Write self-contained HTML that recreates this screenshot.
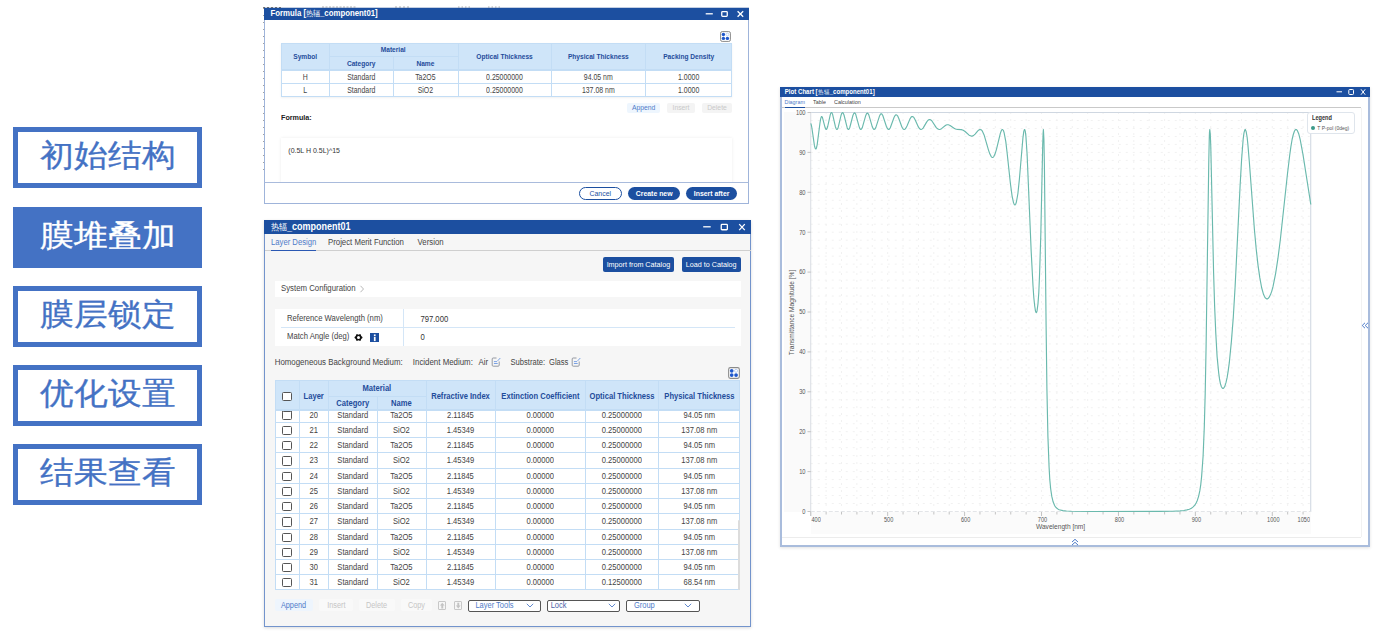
<!DOCTYPE html><html><head><meta charset="utf-8"><style>
html,body{margin:0;padding:0;}
body{width:1378px;height:637px;overflow:hidden;position:relative;background:#fff;font-family:"Liberation Sans", sans-serif;}
div{box-sizing:border-box;}
</style></head><body>
<div style="position:absolute;left:13px;top:127px;width:189.00px;height:61.00px;border:5px solid #4472c4;background:#fff"></div>
<div style="position:absolute;left:13px;top:126.2px;width:189px;height:58px;line-height:58px;text-align:center;font-size:34px;color:#4472c4;-webkit-text-stroke:0.35px #4472c4;transform:scaleY(0.92)">初始结构</div>
<div style="position:absolute;left:13px;top:207px;width:189.00px;height:61.00px;background:#4472c4"></div>
<div style="position:absolute;left:13px;top:206.2px;width:189px;height:58px;line-height:58px;text-align:center;font-size:34px;color:#fff;-webkit-text-stroke:0.35px #fff;transform:scaleY(0.92)">膜堆叠加</div>
<div style="position:absolute;left:13px;top:286px;width:189.00px;height:61.00px;border:5px solid #4472c4;background:#fff"></div>
<div style="position:absolute;left:13px;top:285.2px;width:189px;height:58px;line-height:58px;text-align:center;font-size:34px;color:#4472c4;-webkit-text-stroke:0.35px #4472c4;transform:scaleY(0.92)">膜层锁定</div>
<div style="position:absolute;left:13px;top:365px;width:189.00px;height:61.00px;border:5px solid #4472c4;background:#fff"></div>
<div style="position:absolute;left:13px;top:364.2px;width:189px;height:58px;line-height:58px;text-align:center;font-size:34px;color:#4472c4;-webkit-text-stroke:0.35px #4472c4;transform:scaleY(0.92)">优化设置</div>
<div style="position:absolute;left:13px;top:444px;width:189.00px;height:61.00px;border:5px solid #4472c4;background:#fff"></div>
<div style="position:absolute;left:13px;top:443.2px;width:189px;height:58px;line-height:58px;text-align:center;font-size:34px;color:#4472c4;-webkit-text-stroke:0.35px #4472c4;transform:scaleY(0.92)">结果查看</div>
<div style="position:absolute;left:264px;top:8px;width:485.00px;height:196.00px;background:#fff;border:1px solid #9fb4da;"></div>
<div style="position:absolute;left:264px;top:7px;width:485.00px;height:1.00px;background:#c3cfe3"></div>
<div style="position:absolute;left:264px;top:8px;width:485.00px;height:12.00px;background:#1c4fa0"></div>
<div style="position:absolute;left:270.5px;top:7.76px;height:12.48px;line-height:12.48px;font-size:7.8px;color:#fff;font-weight:bold;white-space:nowrap;transform:scaleY(1.12);">Formula [<span style="font-weight:normal;font-size:0.92em">热辐</span>_component01]</div>
<svg style="position:absolute;left:0;top:0" width="1378" height="637"><g stroke="#fff" stroke-width="1.3" fill="none"><line x1="705.7" y1="13.8" x2="712.8" y2="13.8"/><rect x="721.75" y="11.55" width="5.499999999999955" height="4.8" rx="0.8"/><line x1="737.6" y1="11.200000000000001" x2="743.2" y2="16.7"/><line x1="743.2" y1="11.200000000000001" x2="737.6" y2="16.7"/></g></svg>
<svg style="position:absolute;left:0;top:0" width="1378" height="637"><line x1="263.5" y1="8" x2="263.5" y2="170" stroke="#666" stroke-width="1" stroke-dasharray="1,6" opacity="0.6"/><line x1="263" y1="7.5" x2="282" y2="7.5" stroke="#444" stroke-width="1" stroke-dasharray="2,2" opacity="0.7"/><g stroke="#555" stroke-width="1" opacity="0.45"><line x1="322" y1="7" x2="357" y2="7" stroke-dasharray="2,1.5"/><line x1="395" y1="7" x2="410" y2="7" stroke-dasharray="2,2"/><line x1="458" y1="7" x2="472" y2="7" stroke-dasharray="1.5,2"/><line x1="488" y1="7" x2="500" y2="7" stroke-dasharray="1.5,2"/></g></svg>
<svg style="position:absolute;left:720.4px;top:30.8px" width="11" height="11" viewBox="0 0 11 11"><rect x="0.6" y="0.6" width="9.8" height="9.8" rx="1.6" fill="#fff" stroke="#8a8a8a" stroke-width="1"/><circle cx="3.4" cy="3.5" r="1.7" fill="#2058cc"/><circle cx="3.4" cy="7.4" r="1.7" fill="#2058cc"/><circle cx="7.4" cy="7.4" r="1.7" fill="#2058cc"/><circle cx="7.4" cy="3.5" r="1.4" fill="none" stroke="#a9c3ee" stroke-width="0.7"/></svg>
<div style="position:absolute;left:281px;top:43px;width:451.00px;height:53.70px;background:#fff;border:1px solid #c3ddf5;box-shadow:0 1px 2px rgba(0,0,0,0.06)"></div>
<div style="position:absolute;left:281px;top:43px;width:451.00px;height:26.70px;background:#cfe5f9;border:1px solid #c3ddf5"></div>
<div style="position:absolute;left:329.3px;top:43px;width:1.00px;height:53.70px;background:#c3ddf5"></div>
<div style="position:absolute;left:393.2px;top:56.4px;width:1.00px;height:40.30px;background:#c3ddf5"></div>
<div style="position:absolute;left:457.6px;top:43px;width:1.00px;height:53.70px;background:#c3ddf5"></div>
<div style="position:absolute;left:551.3px;top:43px;width:1.00px;height:53.70px;background:#c3ddf5"></div>
<div style="position:absolute;left:645.3px;top:43px;width:1.00px;height:53.70px;background:#c3ddf5"></div>
<div style="position:absolute;left:329.3px;top:56.4px;width:128.30px;height:1.00px;background:#c3ddf5"></div>
<div style="position:absolute;left:281px;top:69.7px;width:451.00px;height:1.00px;background:#c3ddf5"></div>
<div style="position:absolute;left:281px;top:83.4px;width:451.00px;height:1.00px;background:#c3ddf5"></div>
<div style="position:absolute;left:155.20px;width:300px;text-align:center;top:51.92px;height:10.56px;line-height:10.56px;font-size:6.6px;color:#1f4c9b;font-weight:bold;white-space:nowrap;transform:scaleY(1.22);">Symbol</div>
<div style="position:absolute;left:243.20px;width:300px;text-align:center;top:45.22px;height:10.56px;line-height:10.56px;font-size:6.6px;color:#1f4c9b;font-weight:bold;white-space:nowrap;transform:scaleY(1.22);">Material</div>
<div style="position:absolute;left:211.20px;width:300px;text-align:center;top:58.72px;height:10.56px;line-height:10.56px;font-size:6.6px;color:#1f4c9b;font-weight:bold;white-space:nowrap;transform:scaleY(1.22);">Category</div>
<div style="position:absolute;left:275.40px;width:300px;text-align:center;top:58.72px;height:10.56px;line-height:10.56px;font-size:6.6px;color:#1f4c9b;font-weight:bold;white-space:nowrap;transform:scaleY(1.22);">Name</div>
<div style="position:absolute;left:354.50px;width:300px;text-align:center;top:51.92px;height:10.56px;line-height:10.56px;font-size:6.6px;color:#1f4c9b;font-weight:bold;white-space:nowrap;transform:scaleY(1.22);">Optical Thickness</div>
<div style="position:absolute;left:448.30px;width:300px;text-align:center;top:51.92px;height:10.56px;line-height:10.56px;font-size:6.6px;color:#1f4c9b;font-weight:bold;white-space:nowrap;transform:scaleY(1.22);">Physical Thickness</div>
<div style="position:absolute;left:538.70px;width:300px;text-align:center;top:51.92px;height:10.56px;line-height:10.56px;font-size:6.6px;color:#1f4c9b;font-weight:bold;white-space:nowrap;transform:scaleY(1.22);">Packing Density</div>
<div style="position:absolute;left:155.15px;width:300px;text-align:center;top:72.04px;height:11.12px;line-height:11.12px;font-size:6.95px;color:#444;font-weight:normal;white-space:nowrap;transform:scaleY(1.18);">H</div>
<div style="position:absolute;left:211.25px;width:300px;text-align:center;top:72.04px;height:11.12px;line-height:11.12px;font-size:6.95px;color:#444;font-weight:normal;white-space:nowrap;transform:scaleY(1.18);">Standard</div>
<div style="position:absolute;left:275.40px;width:300px;text-align:center;top:72.04px;height:11.12px;line-height:11.12px;font-size:6.95px;color:#444;font-weight:normal;white-space:nowrap;transform:scaleY(1.18);">Ta2O5</div>
<div style="position:absolute;left:354.45px;width:300px;text-align:center;top:72.04px;height:11.12px;line-height:11.12px;font-size:6.95px;color:#444;font-weight:normal;white-space:nowrap;transform:scaleY(1.18);">0.25000000</div>
<div style="position:absolute;left:448.30px;width:300px;text-align:center;top:72.04px;height:11.12px;line-height:11.12px;font-size:6.95px;color:#444;font-weight:normal;white-space:nowrap;transform:scaleY(1.18);">94.05 nm</div>
<div style="position:absolute;left:538.65px;width:300px;text-align:center;top:72.04px;height:11.12px;line-height:11.12px;font-size:6.95px;color:#444;font-weight:normal;white-space:nowrap;transform:scaleY(1.18);">1.0000</div>
<div style="position:absolute;left:155.15px;width:300px;text-align:center;top:85.44px;height:11.12px;line-height:11.12px;font-size:6.95px;color:#444;font-weight:normal;white-space:nowrap;transform:scaleY(1.18);">L</div>
<div style="position:absolute;left:211.25px;width:300px;text-align:center;top:85.44px;height:11.12px;line-height:11.12px;font-size:6.95px;color:#444;font-weight:normal;white-space:nowrap;transform:scaleY(1.18);">Standard</div>
<div style="position:absolute;left:275.40px;width:300px;text-align:center;top:85.44px;height:11.12px;line-height:11.12px;font-size:6.95px;color:#444;font-weight:normal;white-space:nowrap;transform:scaleY(1.18);">SiO2</div>
<div style="position:absolute;left:354.45px;width:300px;text-align:center;top:85.44px;height:11.12px;line-height:11.12px;font-size:6.95px;color:#444;font-weight:normal;white-space:nowrap;transform:scaleY(1.18);">0.25000000</div>
<div style="position:absolute;left:448.30px;width:300px;text-align:center;top:85.44px;height:11.12px;line-height:11.12px;font-size:6.95px;color:#444;font-weight:normal;white-space:nowrap;transform:scaleY(1.18);">137.08 nm</div>
<div style="position:absolute;left:538.65px;width:300px;text-align:center;top:85.44px;height:11.12px;line-height:11.12px;font-size:6.95px;color:#444;font-weight:normal;white-space:nowrap;transform:scaleY(1.18);">1.0000</div>
<div style="position:absolute;left:626.8px;top:102.5px;width:33.60px;height:10.50px;background:#eef6fe;border-radius:2px"></div>
<div style="position:absolute;left:493.60px;width:300px;text-align:center;top:103.16px;height:10.88px;line-height:10.88px;font-size:6.8px;color:#4f7cc9;font-weight:normal;white-space:nowrap;transform:scaleY(1.12);">Append</div>
<div style="position:absolute;left:667px;top:102.5px;width:28.00px;height:10.50px;background:#f4f4f4;border-radius:2px"></div>
<div style="position:absolute;left:531.00px;width:300px;text-align:center;top:103.16px;height:10.88px;line-height:10.88px;font-size:6.8px;color:#c9c9c9;font-weight:normal;white-space:nowrap;transform:scaleY(1.12);">Insert</div>
<div style="position:absolute;left:702px;top:102.5px;width:30.00px;height:10.50px;background:#f4f4f4;border-radius:2px"></div>
<div style="position:absolute;left:567.00px;width:300px;text-align:center;top:103.16px;height:10.88px;line-height:10.88px;font-size:6.8px;color:#c9c9c9;font-weight:normal;white-space:nowrap;transform:scaleY(1.12);">Delete</div>
<div style="position:absolute;left:281px;top:112.24px;height:11.52px;line-height:11.52px;font-size:7.2px;color:#222;font-weight:bold;white-space:nowrap;transform:scaleY(1.12);">Formula:</div>
<div style="position:absolute;left:281px;top:137.5px;width:451.00px;height:47.50px;background:#fff;box-shadow:0 0 3px rgba(0,0,0,0.08)"></div>
<div style="position:absolute;left:288.3px;top:144.90px;height:11.20px;line-height:11.20px;font-size:7.0px;color:#333;font-weight:normal;white-space:nowrap;transform:scaleY(1.12);">(0.5L H 0.5L)^15</div>
<div style="position:absolute;left:264px;top:182px;width:485.00px;height:22.00px;background:#fff;border:1px solid #9fb4da;border-top:1px solid #a9bbdc"></div>
<div style="position:absolute;left:579px;top:186.5px;width:42.70px;height:13.20px;border:1px solid #1c4fa0;border-radius:7px;background:#fff"></div>
<div style="position:absolute;left:450.30px;width:300px;text-align:center;top:187.58px;height:11.04px;line-height:11.04px;font-size:6.9px;color:#1c4fa0;font-weight:normal;white-space:nowrap;transform:scaleY(1.12);">Cancel</div>
<div style="position:absolute;left:628.3px;top:186.5px;width:51.90px;height:13.20px;background:#1c4fa0;border-radius:7px"></div>
<div style="position:absolute;left:504.20px;width:300px;text-align:center;top:187.58px;height:11.04px;line-height:11.04px;font-size:6.9px;color:#fff;font-weight:bold;white-space:nowrap;transform:scaleY(1.12);">Create new</div>
<div style="position:absolute;left:686.4px;top:186.5px;width:50.40px;height:13.20px;background:#1c4fa0;border-radius:7px"></div>
<div style="position:absolute;left:561.60px;width:300px;text-align:center;top:187.58px;height:11.04px;line-height:11.04px;font-size:6.9px;color:#fff;font-weight:bold;white-space:nowrap;transform:scaleY(1.12);">Insert after</div>
<div style="position:absolute;left:264px;top:220px;width:487.00px;height:406.50px;background:#f6f6f6;border:1px solid #7394cc;box-shadow:0 1px 3px rgba(0,0,0,0.15)"></div>
<div style="position:absolute;left:264px;top:220px;width:487.00px;height:14.00px;background:#1c4fa0"></div>
<div style="position:absolute;left:271px;top:219.80px;height:14.40px;line-height:14.40px;font-size:9px;color:#fff;font-weight:bold;white-space:nowrap;transform:scaleY(1.12);"><span style="font-weight:normal;font-size:0.92em">热辐</span>_component01</div>
<svg style="position:absolute;left:0;top:0" width="1378" height="637"><g stroke="#fff" stroke-width="1.3" fill="none"><line x1="703.2" y1="226.8" x2="710.7" y2="226.8"/><rect x="721.25" y="224.45000000000002" width="6.099999999999977" height="5.2999999999999945" rx="0.8"/><line x1="739.2" y1="224.10000000000002" x2="744.8" y2="230.1"/><line x1="744.8" y1="224.10000000000002" x2="739.2" y2="230.1"/></g></svg>
<div style="position:absolute;left:271px;top:237.34px;height:12.32px;line-height:12.32px;font-size:7.7px;color:#4f7cc9;font-weight:normal;white-space:nowrap;transform:scaleY(1.12);">Layer Design</div>
<div style="position:absolute;left:328px;top:237.26px;height:12.48px;line-height:12.48px;font-size:7.8px;color:#444;font-weight:normal;white-space:nowrap;transform:scaleY(1.12);">Project Merit Function</div>
<div style="position:absolute;left:417.6px;top:237.26px;height:12.48px;line-height:12.48px;font-size:7.8px;color:#444;font-weight:normal;white-space:nowrap;transform:scaleY(1.12);">Version</div>
<div style="position:absolute;left:265px;top:250px;width:485.50px;height:1.00px;background:#cfcfcf"></div>
<div style="position:absolute;left:271px;top:249.5px;width:45.00px;height:1.50px;background:#2a58b3"></div>
<div style="position:absolute;left:602.5px;top:256.6px;width:71.80px;height:15.50px;background:#1c4fa0;border-radius:2px"></div>
<div style="position:absolute;left:488.40px;width:300px;text-align:center;top:258.54px;height:11.52px;line-height:11.52px;font-size:7.2px;color:#fff;font-weight:normal;white-space:nowrap;transform:scaleY(1.12);">Import from Catalog</div>
<div style="position:absolute;left:681.6px;top:256.6px;width:59.10px;height:15.50px;background:#1c4fa0;border-radius:2px"></div>
<div style="position:absolute;left:561.20px;width:300px;text-align:center;top:258.54px;height:11.52px;line-height:11.52px;font-size:7.2px;color:#fff;font-weight:normal;white-space:nowrap;transform:scaleY(1.12);">Load to Catalog</div>
<div style="position:absolute;left:274.7px;top:280.6px;width:466.00px;height:16.50px;background:#fff"></div>
<div style="position:absolute;left:281px;top:283.06px;height:12.48px;line-height:12.48px;font-size:7.8px;color:#444;font-weight:normal;white-space:nowrap;transform:scaleY(1.12);">System Configuration</div>
<svg style="position:absolute;left:358.5px;top:285px" width="6" height="8" viewBox="0 0 6 8"><path d="M1.5 0.8L4.5 4L1.5 7.2" fill="none" stroke="#b0b0b0" stroke-width="0.9"/></svg>
<div style="position:absolute;left:274.7px;top:309.3px;width:466.00px;height:36.50px;background:#fff"></div>
<div style="position:absolute;left:280.5px;top:327.2px;width:454.00px;height:1.00px;background:#d4e6f7"></div>
<div style="position:absolute;left:402.5px;top:309.3px;width:1.00px;height:36.50px;background:#d4e6f7"></div>
<div style="position:absolute;left:287px;top:312.84px;height:12.32px;line-height:12.32px;font-size:7.7px;color:#444;font-weight:normal;white-space:nowrap;transform:scaleY(1.12);">Reference Wavelength (nm)</div>
<div style="position:absolute;left:420.4px;top:314.14px;height:12.32px;line-height:12.32px;font-size:7.7px;color:#333;font-weight:normal;white-space:nowrap;transform:scaleY(1.12);">797.000</div>
<div style="position:absolute;left:287px;top:331.04px;height:12.32px;line-height:12.32px;font-size:7.7px;color:#444;font-weight:normal;white-space:nowrap;transform:scaleY(1.12);">Match Angle (deg)</div>
<div style="position:absolute;left:420.4px;top:332.34px;height:12.32px;line-height:12.32px;font-size:7.7px;color:#333;font-weight:normal;white-space:nowrap;transform:scaleY(1.12);">0</div>
<svg style="position:absolute;left:354.4px;top:332.9px" width="9" height="9" viewBox="0 0 9 9"><path d="M8.60,4.50 L7.98,5.39 L7.10,5.92 L7.05,6.92 L6.55,7.87 L5.43,7.80 L4.50,7.35 L3.57,7.80 L2.45,7.87 L1.95,6.92 L1.90,5.92 L1.02,5.39 L0.40,4.50 L1.02,3.61 L1.90,3.07 L1.95,2.08 L2.45,1.13 L3.57,1.20 L4.50,1.65 L5.43,1.20 L6.55,1.13 L7.05,2.08 L7.10,3.07 L7.98,3.61Z M6.0,4.5 A1.5,1.5 0 1,0 3.0,4.5 A1.5,1.5 0 1,0 6.0,4.5Z" fill="#111" fill-rule="evenodd"/></svg>
<div style="position:absolute;left:370px;top:332.7px;width:9.40px;height:9.30px;background:#1c4fa0"></div>
<svg style="position:absolute;left:370px;top:332.7px" width="9.4" height="9.3" viewBox="0 0 9.4 9.3"><rect x="3.9" y="1.4" width="1.7" height="1.6" fill="#fff"/><rect x="3.9" y="3.8" width="1.7" height="4.3" fill="#fff"/></svg>
<div style="position:absolute;left:274.7px;top:356.68px;height:12.64px;line-height:12.64px;font-size:7.9px;color:#444;font-weight:normal;white-space:nowrap;transform:scaleY(1.12);">Homogeneous Background Medium:</div>
<div style="position:absolute;left:412.8px;top:356.68px;height:12.64px;line-height:12.64px;font-size:7.9px;color:#444;font-weight:normal;white-space:nowrap;transform:scaleY(1.12);">Incident Medium:</div>
<div style="position:absolute;left:478.4px;top:356.68px;height:12.64px;line-height:12.64px;font-size:7.9px;color:#444;font-weight:normal;white-space:nowrap;transform:scaleY(1.12);">Air</div>
<svg style="position:absolute;left:491.3px;top:357px" width="10" height="10" viewBox="0 0 10 10"><path d="M8.2 4.5V8.2Q8.2 9.2 7.2 9.2H2.2Q1.2 9.2 1.2 8.2V2Q1.2 1 2.2 1H5.5" fill="none" stroke="#8a8f98" stroke-width="0.9"/><path d="M2.9 4.6h3.2M2.9 6.5h3.8" stroke="#5b8de0" stroke-width="0.8"/><path d="M6.6 3.9L9.3 1" stroke="#5b8de0" stroke-width="0.8"/></svg>
<div style="position:absolute;left:510.5px;top:356.92px;height:12.16px;line-height:12.16px;font-size:7.6px;color:#444;font-weight:normal;white-space:nowrap;transform:scaleY(1.12);">Substrate:</div>
<div style="position:absolute;left:549px;top:356.92px;height:12.16px;line-height:12.16px;font-size:7.6px;color:#444;font-weight:normal;white-space:nowrap;transform:scaleY(1.12);">Glass</div>
<svg style="position:absolute;left:570.6px;top:357px" width="10" height="10" viewBox="0 0 10 10"><path d="M8.2 4.5V8.2Q8.2 9.2 7.2 9.2H2.2Q1.2 9.2 1.2 8.2V2Q1.2 1 2.2 1H5.5" fill="none" stroke="#8a8f98" stroke-width="0.9"/><path d="M2.9 4.6h3.2M2.9 6.5h3.8" stroke="#5b8de0" stroke-width="0.8"/><path d="M6.6 3.9L9.3 1" stroke="#5b8de0" stroke-width="0.8"/></svg>
<svg style="position:absolute;left:728.2px;top:366.8px" width="12" height="12" viewBox="0 0 11 11"><rect x="0.6" y="0.6" width="9.8" height="9.8" rx="1.6" fill="#fff" stroke="#8a8a8a" stroke-width="1"/><circle cx="3.4" cy="3.5" r="1.7" fill="#2058cc"/><circle cx="3.4" cy="7.4" r="1.7" fill="#2058cc"/><circle cx="7.4" cy="7.4" r="1.7" fill="#2058cc"/><circle cx="7.4" cy="3.5" r="1.4" fill="none" stroke="#a9c3ee" stroke-width="0.7"/></svg>
<div style="position:absolute;left:274.7px;top:380px;width:465.50px;height:210.00px;background:#fff;border:1px solid #c3ddf5"></div>
<div style="position:absolute;left:274.7px;top:380px;width:465.50px;height:30.40px;background:#cfe5f9;border:1px solid #c3ddf5;border-radius:2px 2px 0 0"></div>
<div style="position:absolute;left:299.2px;top:380.5px;width:1.00px;height:209.50px;background:#c3ddf5"></div>
<div style="position:absolute;left:328.3px;top:380.5px;width:1.00px;height:209.50px;background:#c3ddf5"></div>
<div style="position:absolute;left:377.2px;top:395.5px;width:1.00px;height:194.50px;background:#c3ddf5"></div>
<div style="position:absolute;left:425.6px;top:380.5px;width:1.00px;height:209.50px;background:#c3ddf5"></div>
<div style="position:absolute;left:495.2px;top:380.5px;width:1.00px;height:209.50px;background:#c3ddf5"></div>
<div style="position:absolute;left:585.2px;top:380.5px;width:1.00px;height:209.50px;background:#c3ddf5"></div>
<div style="position:absolute;left:658.4px;top:380.5px;width:1.00px;height:209.50px;background:#c3ddf5"></div>
<div style="position:absolute;left:328.3px;top:395.5px;width:97.30px;height:1.00px;background:#c3ddf5"></div>
<div style="position:absolute;left:274.7px;top:410px;width:465.50px;height:1.00px;background:#c3ddf5"></div>
<div style="position:absolute;left:282.4px;top:391.7px;width:9.20px;height:9.20px;border:1.2px solid #555;border-radius:1.5px;background:#fff"></div>
<div style="position:absolute;left:163.70px;width:300px;text-align:center;top:390.72px;height:12.16px;line-height:12.16px;font-size:7.6px;color:#1f4c9b;font-weight:bold;white-space:nowrap;transform:scaleY(1.12);">Layer</div>
<div style="position:absolute;left:226.90px;width:300px;text-align:center;top:382.52px;height:12.16px;line-height:12.16px;font-size:7.6px;color:#1f4c9b;font-weight:bold;white-space:nowrap;transform:scaleY(1.12);">Material</div>
<div style="position:absolute;left:202.70px;width:300px;text-align:center;top:397.52px;height:12.16px;line-height:12.16px;font-size:7.6px;color:#1f4c9b;font-weight:bold;white-space:nowrap;transform:scaleY(1.12);">Category</div>
<div style="position:absolute;left:251.40px;width:300px;text-align:center;top:397.52px;height:12.16px;line-height:12.16px;font-size:7.6px;color:#1f4c9b;font-weight:bold;white-space:nowrap;transform:scaleY(1.12);">Name</div>
<div style="position:absolute;left:310.50px;width:300px;text-align:center;top:390.72px;height:12.16px;line-height:12.16px;font-size:7.6px;color:#1f4c9b;font-weight:bold;white-space:nowrap;transform:scaleY(1.12);">Refractive Index</div>
<div style="position:absolute;left:390.40px;width:300px;text-align:center;top:390.72px;height:12.16px;line-height:12.16px;font-size:7.6px;color:#1f4c9b;font-weight:bold;white-space:nowrap;transform:scaleY(1.12);">Extinction Coefficient</div>
<div style="position:absolute;left:472.00px;width:300px;text-align:center;top:390.72px;height:12.16px;line-height:12.16px;font-size:7.6px;color:#1f4c9b;font-weight:bold;white-space:nowrap;transform:scaleY(1.12);">Optical Thickness</div>
<div style="position:absolute;left:549.40px;width:300px;text-align:center;top:390.72px;height:12.16px;line-height:12.16px;font-size:7.6px;color:#1f4c9b;font-weight:bold;white-space:nowrap;transform:scaleY(1.12);">Physical Thickness</div>
<div style="position:absolute;left:274.7px;top:422.0px;width:465.50px;height:1.00px;background:#c3ddf5"></div>
<div style="position:absolute;left:282.4px;top:411px;width:9.20px;height:4.00px;border:1.2px solid #555;border-top:none;border-radius:0 0 1.5px 1.5px;background:#fff"></div>
<div style="position:absolute;left:282.4px;top:410.79999999999995px;width:9.20px;height:9.20px;border:1.2px solid #555;border-radius:1.5px;background:#fff"></div>
<div style="position:absolute;left:163.75px;width:300px;text-align:center;top:409.82px;height:12.16px;line-height:12.16px;font-size:7.6px;color:#444;font-weight:normal;white-space:nowrap;transform:scaleY(1.12);">20</div>
<div style="position:absolute;left:202.75px;width:300px;text-align:center;top:409.82px;height:12.16px;line-height:12.16px;font-size:7.6px;color:#444;font-weight:normal;white-space:nowrap;transform:scaleY(1.12);">Standard</div>
<div style="position:absolute;left:251.40px;width:300px;text-align:center;top:409.82px;height:12.16px;line-height:12.16px;font-size:7.6px;color:#444;font-weight:normal;white-space:nowrap;transform:scaleY(1.12);">Ta2O5</div>
<div style="position:absolute;left:310.40px;width:300px;text-align:center;top:409.82px;height:12.16px;line-height:12.16px;font-size:7.6px;color:#444;font-weight:normal;white-space:nowrap;transform:scaleY(1.12);">2.11845</div>
<div style="position:absolute;left:390.20px;width:300px;text-align:center;top:409.82px;height:12.16px;line-height:12.16px;font-size:7.6px;color:#444;font-weight:normal;white-space:nowrap;transform:scaleY(1.12);">0.00000</div>
<div style="position:absolute;left:471.80px;width:300px;text-align:center;top:409.82px;height:12.16px;line-height:12.16px;font-size:7.6px;color:#444;font-weight:normal;white-space:nowrap;transform:scaleY(1.12);">0.25000000</div>
<div style="position:absolute;left:549.30px;width:300px;text-align:center;top:409.82px;height:12.16px;line-height:12.16px;font-size:7.6px;color:#444;font-weight:normal;white-space:nowrap;transform:scaleY(1.12);">94.05 nm</div>
<div style="position:absolute;left:274.7px;top:437.22px;width:465.50px;height:1.00px;background:#c3ddf5"></div>
<div style="position:absolute;left:282.4px;top:426.02px;width:9.20px;height:9.20px;border:1.2px solid #555;border-radius:1.5px;background:#fff"></div>
<div style="position:absolute;left:163.75px;width:300px;text-align:center;top:425.04px;height:12.16px;line-height:12.16px;font-size:7.6px;color:#444;font-weight:normal;white-space:nowrap;transform:scaleY(1.12);">21</div>
<div style="position:absolute;left:202.75px;width:300px;text-align:center;top:425.04px;height:12.16px;line-height:12.16px;font-size:7.6px;color:#444;font-weight:normal;white-space:nowrap;transform:scaleY(1.12);">Standard</div>
<div style="position:absolute;left:251.40px;width:300px;text-align:center;top:425.04px;height:12.16px;line-height:12.16px;font-size:7.6px;color:#444;font-weight:normal;white-space:nowrap;transform:scaleY(1.12);">SiO2</div>
<div style="position:absolute;left:310.40px;width:300px;text-align:center;top:425.04px;height:12.16px;line-height:12.16px;font-size:7.6px;color:#444;font-weight:normal;white-space:nowrap;transform:scaleY(1.12);">1.45349</div>
<div style="position:absolute;left:390.20px;width:300px;text-align:center;top:425.04px;height:12.16px;line-height:12.16px;font-size:7.6px;color:#444;font-weight:normal;white-space:nowrap;transform:scaleY(1.12);">0.00000</div>
<div style="position:absolute;left:471.80px;width:300px;text-align:center;top:425.04px;height:12.16px;line-height:12.16px;font-size:7.6px;color:#444;font-weight:normal;white-space:nowrap;transform:scaleY(1.12);">0.25000000</div>
<div style="position:absolute;left:549.30px;width:300px;text-align:center;top:425.04px;height:12.16px;line-height:12.16px;font-size:7.6px;color:#444;font-weight:normal;white-space:nowrap;transform:scaleY(1.12);">137.08 nm</div>
<div style="position:absolute;left:274.7px;top:452.44px;width:465.50px;height:1.00px;background:#c3ddf5"></div>
<div style="position:absolute;left:282.4px;top:441.23999999999995px;width:9.20px;height:9.20px;border:1.2px solid #555;border-radius:1.5px;background:#fff"></div>
<div style="position:absolute;left:163.75px;width:300px;text-align:center;top:440.26px;height:12.16px;line-height:12.16px;font-size:7.6px;color:#444;font-weight:normal;white-space:nowrap;transform:scaleY(1.12);">22</div>
<div style="position:absolute;left:202.75px;width:300px;text-align:center;top:440.26px;height:12.16px;line-height:12.16px;font-size:7.6px;color:#444;font-weight:normal;white-space:nowrap;transform:scaleY(1.12);">Standard</div>
<div style="position:absolute;left:251.40px;width:300px;text-align:center;top:440.26px;height:12.16px;line-height:12.16px;font-size:7.6px;color:#444;font-weight:normal;white-space:nowrap;transform:scaleY(1.12);">Ta2O5</div>
<div style="position:absolute;left:310.40px;width:300px;text-align:center;top:440.26px;height:12.16px;line-height:12.16px;font-size:7.6px;color:#444;font-weight:normal;white-space:nowrap;transform:scaleY(1.12);">2.11845</div>
<div style="position:absolute;left:390.20px;width:300px;text-align:center;top:440.26px;height:12.16px;line-height:12.16px;font-size:7.6px;color:#444;font-weight:normal;white-space:nowrap;transform:scaleY(1.12);">0.00000</div>
<div style="position:absolute;left:471.80px;width:300px;text-align:center;top:440.26px;height:12.16px;line-height:12.16px;font-size:7.6px;color:#444;font-weight:normal;white-space:nowrap;transform:scaleY(1.12);">0.25000000</div>
<div style="position:absolute;left:549.30px;width:300px;text-align:center;top:440.26px;height:12.16px;line-height:12.16px;font-size:7.6px;color:#444;font-weight:normal;white-space:nowrap;transform:scaleY(1.12);">94.05 nm</div>
<div style="position:absolute;left:274.7px;top:467.66px;width:465.50px;height:1.00px;background:#c3ddf5"></div>
<div style="position:absolute;left:282.4px;top:456.46px;width:9.20px;height:9.20px;border:1.2px solid #555;border-radius:1.5px;background:#fff"></div>
<div style="position:absolute;left:163.75px;width:300px;text-align:center;top:455.48px;height:12.16px;line-height:12.16px;font-size:7.6px;color:#444;font-weight:normal;white-space:nowrap;transform:scaleY(1.12);">23</div>
<div style="position:absolute;left:202.75px;width:300px;text-align:center;top:455.48px;height:12.16px;line-height:12.16px;font-size:7.6px;color:#444;font-weight:normal;white-space:nowrap;transform:scaleY(1.12);">Standard</div>
<div style="position:absolute;left:251.40px;width:300px;text-align:center;top:455.48px;height:12.16px;line-height:12.16px;font-size:7.6px;color:#444;font-weight:normal;white-space:nowrap;transform:scaleY(1.12);">SiO2</div>
<div style="position:absolute;left:310.40px;width:300px;text-align:center;top:455.48px;height:12.16px;line-height:12.16px;font-size:7.6px;color:#444;font-weight:normal;white-space:nowrap;transform:scaleY(1.12);">1.45349</div>
<div style="position:absolute;left:390.20px;width:300px;text-align:center;top:455.48px;height:12.16px;line-height:12.16px;font-size:7.6px;color:#444;font-weight:normal;white-space:nowrap;transform:scaleY(1.12);">0.00000</div>
<div style="position:absolute;left:471.80px;width:300px;text-align:center;top:455.48px;height:12.16px;line-height:12.16px;font-size:7.6px;color:#444;font-weight:normal;white-space:nowrap;transform:scaleY(1.12);">0.25000000</div>
<div style="position:absolute;left:549.30px;width:300px;text-align:center;top:455.48px;height:12.16px;line-height:12.16px;font-size:7.6px;color:#444;font-weight:normal;white-space:nowrap;transform:scaleY(1.12);">137.08 nm</div>
<div style="position:absolute;left:274.7px;top:482.88px;width:465.50px;height:1.00px;background:#c3ddf5"></div>
<div style="position:absolute;left:282.4px;top:471.67999999999995px;width:9.20px;height:9.20px;border:1.2px solid #555;border-radius:1.5px;background:#fff"></div>
<div style="position:absolute;left:163.75px;width:300px;text-align:center;top:470.70px;height:12.16px;line-height:12.16px;font-size:7.6px;color:#444;font-weight:normal;white-space:nowrap;transform:scaleY(1.12);">24</div>
<div style="position:absolute;left:202.75px;width:300px;text-align:center;top:470.70px;height:12.16px;line-height:12.16px;font-size:7.6px;color:#444;font-weight:normal;white-space:nowrap;transform:scaleY(1.12);">Standard</div>
<div style="position:absolute;left:251.40px;width:300px;text-align:center;top:470.70px;height:12.16px;line-height:12.16px;font-size:7.6px;color:#444;font-weight:normal;white-space:nowrap;transform:scaleY(1.12);">Ta2O5</div>
<div style="position:absolute;left:310.40px;width:300px;text-align:center;top:470.70px;height:12.16px;line-height:12.16px;font-size:7.6px;color:#444;font-weight:normal;white-space:nowrap;transform:scaleY(1.12);">2.11845</div>
<div style="position:absolute;left:390.20px;width:300px;text-align:center;top:470.70px;height:12.16px;line-height:12.16px;font-size:7.6px;color:#444;font-weight:normal;white-space:nowrap;transform:scaleY(1.12);">0.00000</div>
<div style="position:absolute;left:471.80px;width:300px;text-align:center;top:470.70px;height:12.16px;line-height:12.16px;font-size:7.6px;color:#444;font-weight:normal;white-space:nowrap;transform:scaleY(1.12);">0.25000000</div>
<div style="position:absolute;left:549.30px;width:300px;text-align:center;top:470.70px;height:12.16px;line-height:12.16px;font-size:7.6px;color:#444;font-weight:normal;white-space:nowrap;transform:scaleY(1.12);">94.05 nm</div>
<div style="position:absolute;left:274.7px;top:498.1px;width:465.50px;height:1.00px;background:#c3ddf5"></div>
<div style="position:absolute;left:282.4px;top:486.9px;width:9.20px;height:9.20px;border:1.2px solid #555;border-radius:1.5px;background:#fff"></div>
<div style="position:absolute;left:163.75px;width:300px;text-align:center;top:485.92px;height:12.16px;line-height:12.16px;font-size:7.6px;color:#444;font-weight:normal;white-space:nowrap;transform:scaleY(1.12);">25</div>
<div style="position:absolute;left:202.75px;width:300px;text-align:center;top:485.92px;height:12.16px;line-height:12.16px;font-size:7.6px;color:#444;font-weight:normal;white-space:nowrap;transform:scaleY(1.12);">Standard</div>
<div style="position:absolute;left:251.40px;width:300px;text-align:center;top:485.92px;height:12.16px;line-height:12.16px;font-size:7.6px;color:#444;font-weight:normal;white-space:nowrap;transform:scaleY(1.12);">SiO2</div>
<div style="position:absolute;left:310.40px;width:300px;text-align:center;top:485.92px;height:12.16px;line-height:12.16px;font-size:7.6px;color:#444;font-weight:normal;white-space:nowrap;transform:scaleY(1.12);">1.45349</div>
<div style="position:absolute;left:390.20px;width:300px;text-align:center;top:485.92px;height:12.16px;line-height:12.16px;font-size:7.6px;color:#444;font-weight:normal;white-space:nowrap;transform:scaleY(1.12);">0.00000</div>
<div style="position:absolute;left:471.80px;width:300px;text-align:center;top:485.92px;height:12.16px;line-height:12.16px;font-size:7.6px;color:#444;font-weight:normal;white-space:nowrap;transform:scaleY(1.12);">0.25000000</div>
<div style="position:absolute;left:549.30px;width:300px;text-align:center;top:485.92px;height:12.16px;line-height:12.16px;font-size:7.6px;color:#444;font-weight:normal;white-space:nowrap;transform:scaleY(1.12);">137.08 nm</div>
<div style="position:absolute;left:274.7px;top:513.32px;width:465.50px;height:1.00px;background:#c3ddf5"></div>
<div style="position:absolute;left:282.4px;top:502.11999999999995px;width:9.20px;height:9.20px;border:1.2px solid #555;border-radius:1.5px;background:#fff"></div>
<div style="position:absolute;left:163.75px;width:300px;text-align:center;top:501.14px;height:12.16px;line-height:12.16px;font-size:7.6px;color:#444;font-weight:normal;white-space:nowrap;transform:scaleY(1.12);">26</div>
<div style="position:absolute;left:202.75px;width:300px;text-align:center;top:501.14px;height:12.16px;line-height:12.16px;font-size:7.6px;color:#444;font-weight:normal;white-space:nowrap;transform:scaleY(1.12);">Standard</div>
<div style="position:absolute;left:251.40px;width:300px;text-align:center;top:501.14px;height:12.16px;line-height:12.16px;font-size:7.6px;color:#444;font-weight:normal;white-space:nowrap;transform:scaleY(1.12);">Ta2O5</div>
<div style="position:absolute;left:310.40px;width:300px;text-align:center;top:501.14px;height:12.16px;line-height:12.16px;font-size:7.6px;color:#444;font-weight:normal;white-space:nowrap;transform:scaleY(1.12);">2.11845</div>
<div style="position:absolute;left:390.20px;width:300px;text-align:center;top:501.14px;height:12.16px;line-height:12.16px;font-size:7.6px;color:#444;font-weight:normal;white-space:nowrap;transform:scaleY(1.12);">0.00000</div>
<div style="position:absolute;left:471.80px;width:300px;text-align:center;top:501.14px;height:12.16px;line-height:12.16px;font-size:7.6px;color:#444;font-weight:normal;white-space:nowrap;transform:scaleY(1.12);">0.25000000</div>
<div style="position:absolute;left:549.30px;width:300px;text-align:center;top:501.14px;height:12.16px;line-height:12.16px;font-size:7.6px;color:#444;font-weight:normal;white-space:nowrap;transform:scaleY(1.12);">94.05 nm</div>
<div style="position:absolute;left:274.7px;top:528.54px;width:465.50px;height:1.00px;background:#c3ddf5"></div>
<div style="position:absolute;left:282.4px;top:517.3399999999999px;width:9.20px;height:9.20px;border:1.2px solid #555;border-radius:1.5px;background:#fff"></div>
<div style="position:absolute;left:163.75px;width:300px;text-align:center;top:516.36px;height:12.16px;line-height:12.16px;font-size:7.6px;color:#444;font-weight:normal;white-space:nowrap;transform:scaleY(1.12);">27</div>
<div style="position:absolute;left:202.75px;width:300px;text-align:center;top:516.36px;height:12.16px;line-height:12.16px;font-size:7.6px;color:#444;font-weight:normal;white-space:nowrap;transform:scaleY(1.12);">Standard</div>
<div style="position:absolute;left:251.40px;width:300px;text-align:center;top:516.36px;height:12.16px;line-height:12.16px;font-size:7.6px;color:#444;font-weight:normal;white-space:nowrap;transform:scaleY(1.12);">SiO2</div>
<div style="position:absolute;left:310.40px;width:300px;text-align:center;top:516.36px;height:12.16px;line-height:12.16px;font-size:7.6px;color:#444;font-weight:normal;white-space:nowrap;transform:scaleY(1.12);">1.45349</div>
<div style="position:absolute;left:390.20px;width:300px;text-align:center;top:516.36px;height:12.16px;line-height:12.16px;font-size:7.6px;color:#444;font-weight:normal;white-space:nowrap;transform:scaleY(1.12);">0.00000</div>
<div style="position:absolute;left:471.80px;width:300px;text-align:center;top:516.36px;height:12.16px;line-height:12.16px;font-size:7.6px;color:#444;font-weight:normal;white-space:nowrap;transform:scaleY(1.12);">0.25000000</div>
<div style="position:absolute;left:549.30px;width:300px;text-align:center;top:516.36px;height:12.16px;line-height:12.16px;font-size:7.6px;color:#444;font-weight:normal;white-space:nowrap;transform:scaleY(1.12);">137.08 nm</div>
<div style="position:absolute;left:274.7px;top:543.76px;width:465.50px;height:1.00px;background:#c3ddf5"></div>
<div style="position:absolute;left:282.4px;top:532.56px;width:9.20px;height:9.20px;border:1.2px solid #555;border-radius:1.5px;background:#fff"></div>
<div style="position:absolute;left:163.75px;width:300px;text-align:center;top:531.58px;height:12.16px;line-height:12.16px;font-size:7.6px;color:#444;font-weight:normal;white-space:nowrap;transform:scaleY(1.12);">28</div>
<div style="position:absolute;left:202.75px;width:300px;text-align:center;top:531.58px;height:12.16px;line-height:12.16px;font-size:7.6px;color:#444;font-weight:normal;white-space:nowrap;transform:scaleY(1.12);">Standard</div>
<div style="position:absolute;left:251.40px;width:300px;text-align:center;top:531.58px;height:12.16px;line-height:12.16px;font-size:7.6px;color:#444;font-weight:normal;white-space:nowrap;transform:scaleY(1.12);">Ta2O5</div>
<div style="position:absolute;left:310.40px;width:300px;text-align:center;top:531.58px;height:12.16px;line-height:12.16px;font-size:7.6px;color:#444;font-weight:normal;white-space:nowrap;transform:scaleY(1.12);">2.11845</div>
<div style="position:absolute;left:390.20px;width:300px;text-align:center;top:531.58px;height:12.16px;line-height:12.16px;font-size:7.6px;color:#444;font-weight:normal;white-space:nowrap;transform:scaleY(1.12);">0.00000</div>
<div style="position:absolute;left:471.80px;width:300px;text-align:center;top:531.58px;height:12.16px;line-height:12.16px;font-size:7.6px;color:#444;font-weight:normal;white-space:nowrap;transform:scaleY(1.12);">0.25000000</div>
<div style="position:absolute;left:549.30px;width:300px;text-align:center;top:531.58px;height:12.16px;line-height:12.16px;font-size:7.6px;color:#444;font-weight:normal;white-space:nowrap;transform:scaleY(1.12);">94.05 nm</div>
<div style="position:absolute;left:274.7px;top:558.98px;width:465.50px;height:1.00px;background:#c3ddf5"></div>
<div style="position:absolute;left:282.4px;top:547.78px;width:9.20px;height:9.20px;border:1.2px solid #555;border-radius:1.5px;background:#fff"></div>
<div style="position:absolute;left:163.75px;width:300px;text-align:center;top:546.80px;height:12.16px;line-height:12.16px;font-size:7.6px;color:#444;font-weight:normal;white-space:nowrap;transform:scaleY(1.12);">29</div>
<div style="position:absolute;left:202.75px;width:300px;text-align:center;top:546.80px;height:12.16px;line-height:12.16px;font-size:7.6px;color:#444;font-weight:normal;white-space:nowrap;transform:scaleY(1.12);">Standard</div>
<div style="position:absolute;left:251.40px;width:300px;text-align:center;top:546.80px;height:12.16px;line-height:12.16px;font-size:7.6px;color:#444;font-weight:normal;white-space:nowrap;transform:scaleY(1.12);">SiO2</div>
<div style="position:absolute;left:310.40px;width:300px;text-align:center;top:546.80px;height:12.16px;line-height:12.16px;font-size:7.6px;color:#444;font-weight:normal;white-space:nowrap;transform:scaleY(1.12);">1.45349</div>
<div style="position:absolute;left:390.20px;width:300px;text-align:center;top:546.80px;height:12.16px;line-height:12.16px;font-size:7.6px;color:#444;font-weight:normal;white-space:nowrap;transform:scaleY(1.12);">0.00000</div>
<div style="position:absolute;left:471.80px;width:300px;text-align:center;top:546.80px;height:12.16px;line-height:12.16px;font-size:7.6px;color:#444;font-weight:normal;white-space:nowrap;transform:scaleY(1.12);">0.25000000</div>
<div style="position:absolute;left:549.30px;width:300px;text-align:center;top:546.80px;height:12.16px;line-height:12.16px;font-size:7.6px;color:#444;font-weight:normal;white-space:nowrap;transform:scaleY(1.12);">137.08 nm</div>
<div style="position:absolute;left:274.7px;top:574.2px;width:465.50px;height:1.00px;background:#c3ddf5"></div>
<div style="position:absolute;left:282.4px;top:563.0px;width:9.20px;height:9.20px;border:1.2px solid #555;border-radius:1.5px;background:#fff"></div>
<div style="position:absolute;left:163.75px;width:300px;text-align:center;top:562.02px;height:12.16px;line-height:12.16px;font-size:7.6px;color:#444;font-weight:normal;white-space:nowrap;transform:scaleY(1.12);">30</div>
<div style="position:absolute;left:202.75px;width:300px;text-align:center;top:562.02px;height:12.16px;line-height:12.16px;font-size:7.6px;color:#444;font-weight:normal;white-space:nowrap;transform:scaleY(1.12);">Standard</div>
<div style="position:absolute;left:251.40px;width:300px;text-align:center;top:562.02px;height:12.16px;line-height:12.16px;font-size:7.6px;color:#444;font-weight:normal;white-space:nowrap;transform:scaleY(1.12);">Ta2O5</div>
<div style="position:absolute;left:310.40px;width:300px;text-align:center;top:562.02px;height:12.16px;line-height:12.16px;font-size:7.6px;color:#444;font-weight:normal;white-space:nowrap;transform:scaleY(1.12);">2.11845</div>
<div style="position:absolute;left:390.20px;width:300px;text-align:center;top:562.02px;height:12.16px;line-height:12.16px;font-size:7.6px;color:#444;font-weight:normal;white-space:nowrap;transform:scaleY(1.12);">0.00000</div>
<div style="position:absolute;left:471.80px;width:300px;text-align:center;top:562.02px;height:12.16px;line-height:12.16px;font-size:7.6px;color:#444;font-weight:normal;white-space:nowrap;transform:scaleY(1.12);">0.25000000</div>
<div style="position:absolute;left:549.30px;width:300px;text-align:center;top:562.02px;height:12.16px;line-height:12.16px;font-size:7.6px;color:#444;font-weight:normal;white-space:nowrap;transform:scaleY(1.12);">94.05 nm</div>
<div style="position:absolute;left:282.4px;top:578.2199999999999px;width:9.20px;height:9.20px;border:1.2px solid #555;border-radius:1.5px;background:#fff"></div>
<div style="position:absolute;left:163.75px;width:300px;text-align:center;top:577.24px;height:12.16px;line-height:12.16px;font-size:7.6px;color:#444;font-weight:normal;white-space:nowrap;transform:scaleY(1.12);">31</div>
<div style="position:absolute;left:202.75px;width:300px;text-align:center;top:577.24px;height:12.16px;line-height:12.16px;font-size:7.6px;color:#444;font-weight:normal;white-space:nowrap;transform:scaleY(1.12);">Standard</div>
<div style="position:absolute;left:251.40px;width:300px;text-align:center;top:577.24px;height:12.16px;line-height:12.16px;font-size:7.6px;color:#444;font-weight:normal;white-space:nowrap;transform:scaleY(1.12);">SiO2</div>
<div style="position:absolute;left:310.40px;width:300px;text-align:center;top:577.24px;height:12.16px;line-height:12.16px;font-size:7.6px;color:#444;font-weight:normal;white-space:nowrap;transform:scaleY(1.12);">1.45349</div>
<div style="position:absolute;left:390.20px;width:300px;text-align:center;top:577.24px;height:12.16px;line-height:12.16px;font-size:7.6px;color:#444;font-weight:normal;white-space:nowrap;transform:scaleY(1.12);">0.00000</div>
<div style="position:absolute;left:471.80px;width:300px;text-align:center;top:577.24px;height:12.16px;line-height:12.16px;font-size:7.6px;color:#444;font-weight:normal;white-space:nowrap;transform:scaleY(1.12);">0.12500000</div>
<div style="position:absolute;left:549.30px;width:300px;text-align:center;top:577.24px;height:12.16px;line-height:12.16px;font-size:7.6px;color:#444;font-weight:normal;white-space:nowrap;transform:scaleY(1.12);">68.54 nm</div>
<div style="position:absolute;left:737.5px;top:519.5px;width:2.50px;height:70.00px;background:#dcdcdc;border-radius:1px"></div>
<div style="position:absolute;left:274.7px;top:380px;width:465.50px;height:30.40px;background:#cfe5f9;border:1px solid #c3ddf5"></div>
<div style="position:absolute;left:299.2px;top:380.5px;width:1.00px;height:29.90px;background:#c3ddf5"></div>
<div style="position:absolute;left:328.3px;top:380.5px;width:1.00px;height:29.90px;background:#c3ddf5"></div>
<div style="position:absolute;left:377.2px;top:395.5px;width:1.00px;height:14.90px;background:#c3ddf5"></div>
<div style="position:absolute;left:425.6px;top:380.5px;width:1.00px;height:29.90px;background:#c3ddf5"></div>
<div style="position:absolute;left:495.2px;top:380.5px;width:1.00px;height:29.90px;background:#c3ddf5"></div>
<div style="position:absolute;left:585.2px;top:380.5px;width:1.00px;height:29.90px;background:#c3ddf5"></div>
<div style="position:absolute;left:658.4px;top:380.5px;width:1.00px;height:29.90px;background:#c3ddf5"></div>
<div style="position:absolute;left:328.3px;top:395.5px;width:97.30px;height:1.00px;background:#c3ddf5"></div>
<div style="position:absolute;left:282.4px;top:391.7px;width:9.20px;height:9.20px;border:1.2px solid #555;border-radius:1.5px;background:#fff"></div>
<div style="position:absolute;left:163.70px;width:300px;text-align:center;top:390.72px;height:12.16px;line-height:12.16px;font-size:7.6px;color:#1f4c9b;font-weight:bold;white-space:nowrap;transform:scaleY(1.12);">Layer</div>
<div style="position:absolute;left:226.90px;width:300px;text-align:center;top:382.52px;height:12.16px;line-height:12.16px;font-size:7.6px;color:#1f4c9b;font-weight:bold;white-space:nowrap;transform:scaleY(1.12);">Material</div>
<div style="position:absolute;left:202.70px;width:300px;text-align:center;top:397.52px;height:12.16px;line-height:12.16px;font-size:7.6px;color:#1f4c9b;font-weight:bold;white-space:nowrap;transform:scaleY(1.12);">Category</div>
<div style="position:absolute;left:251.40px;width:300px;text-align:center;top:397.52px;height:12.16px;line-height:12.16px;font-size:7.6px;color:#1f4c9b;font-weight:bold;white-space:nowrap;transform:scaleY(1.12);">Name</div>
<div style="position:absolute;left:310.50px;width:300px;text-align:center;top:390.72px;height:12.16px;line-height:12.16px;font-size:7.6px;color:#1f4c9b;font-weight:bold;white-space:nowrap;transform:scaleY(1.12);">Refractive Index</div>
<div style="position:absolute;left:390.40px;width:300px;text-align:center;top:390.72px;height:12.16px;line-height:12.16px;font-size:7.6px;color:#1f4c9b;font-weight:bold;white-space:nowrap;transform:scaleY(1.12);">Extinction Coefficient</div>
<div style="position:absolute;left:472.00px;width:300px;text-align:center;top:390.72px;height:12.16px;line-height:12.16px;font-size:7.6px;color:#1f4c9b;font-weight:bold;white-space:nowrap;transform:scaleY(1.12);">Optical Thickness</div>
<div style="position:absolute;left:549.40px;width:300px;text-align:center;top:390.72px;height:12.16px;line-height:12.16px;font-size:7.6px;color:#1f4c9b;font-weight:bold;white-space:nowrap;transform:scaleY(1.12);">Physical Thickness</div>
<div style="position:absolute;left:274.5px;top:599.2px;width:38.10px;height:11.70px;background:#eef5fd;border-radius:2px"></div>
<div style="position:absolute;left:143.50px;width:300px;text-align:center;top:599.96px;height:11.68px;line-height:11.68px;font-size:7.3px;color:#4f7cc9;font-weight:normal;white-space:nowrap;transform:scaleY(1.12);">Append</div>
<div style="position:absolute;left:319px;top:599.2px;width:34.00px;height:11.70px;background:#f9f9f9;border-radius:2px"></div>
<div style="position:absolute;left:186.40px;width:300px;text-align:center;top:600.16px;height:11.68px;line-height:11.68px;font-size:7.3px;color:#c6c6c6;font-weight:normal;white-space:nowrap;transform:scaleY(1.12);">Insert</div>
<div style="position:absolute;left:359px;top:599.2px;width:36.00px;height:11.70px;background:#f9f9f9;border-radius:2px"></div>
<div style="position:absolute;left:226.50px;width:300px;text-align:center;top:600.16px;height:11.68px;line-height:11.68px;font-size:7.3px;color:#c6c6c6;font-weight:normal;white-space:nowrap;transform:scaleY(1.12);">Delete</div>
<div style="position:absolute;left:401px;top:599.2px;width:31.00px;height:11.70px;background:#f9f9f9;border-radius:2px"></div>
<div style="position:absolute;left:266.50px;width:300px;text-align:center;top:600.16px;height:11.68px;line-height:11.68px;font-size:7.3px;color:#c6c6c6;font-weight:normal;white-space:nowrap;transform:scaleY(1.12);">Copy</div>
<div style="position:absolute;left:437.7px;top:600.5px;width:8.50px;height:9.00px;border:1px solid #c8c8c8;border-radius:1px"></div>
<svg style="position:absolute;left:437.7px;top:600.5px" width="8.5" height="9" viewBox="0 0 8.5 9"><path d="M4.25 1.8L6.6 4.6H5.2V7.4H3.3V4.6H1.9Z" fill="#c4c4c4"/></svg>
<div style="position:absolute;left:453.6px;top:600.5px;width:8.50px;height:9.00px;border:1px solid #c8c8c8;border-radius:1px"></div>
<svg style="position:absolute;left:453.6px;top:600.5px" width="8.5" height="9" viewBox="0 0 8.5 9"><path d="M4.25 7.4L6.6 4.6H5.2V1.8H3.3V4.6H1.9Z" fill="#c4c4c4"/></svg>
<div style="position:absolute;left:468px;top:599.5px;width:72.80px;height:12.00px;border:1px solid #555;border-radius:2px;background:#fff"></div>
<div style="position:absolute;left:475.4px;top:600.00px;height:12.00px;line-height:12.00px;font-size:7.5px;color:#4f7cc9;font-weight:normal;white-space:nowrap;transform:scaleY(1.12);">Layer Tools</div>
<svg style="position:absolute;left:525.8px;top:603px" width="8" height="5" viewBox="0 0 8 5"><path d="M0.8 0.8L4 4L7.2 0.8" fill="none" stroke="#4f7cc9" stroke-width="0.9"/></svg>
<div style="position:absolute;left:547.3px;top:599.5px;width:73.10px;height:12.00px;border:1px solid #555;border-radius:2px;background:#fff"></div>
<div style="position:absolute;left:550.6999999999999px;top:600.00px;height:12.00px;line-height:12.00px;font-size:7.5px;color:#4d64a8;font-weight:normal;white-space:nowrap;transform:scaleY(1.12);">Lock</div>
<svg style="position:absolute;left:608.4px;top:603px" width="8" height="5" viewBox="0 0 8 5"><path d="M0.8 0.8L4 4L7.2 0.8" fill="none" stroke="#4f7cc9" stroke-width="0.9"/></svg>
<div style="position:absolute;left:626.4px;top:599.5px;width:73.20px;height:12.00px;border:1px solid #555;border-radius:2px;background:#fff"></div>
<div style="position:absolute;left:633.9px;top:600.00px;height:12.00px;line-height:12.00px;font-size:7.5px;color:#4f7cc9;font-weight:normal;white-space:nowrap;transform:scaleY(1.12);">Group</div>
<svg style="position:absolute;left:683.8000000000001px;top:603px" width="8" height="5" viewBox="0 0 8 5"><path d="M0.8 0.8L4 4L7.2 0.8" fill="none" stroke="#4f7cc9" stroke-width="0.9"/></svg>
<div style="position:absolute;left:780px;top:87px;width:590.00px;height:459.50px;background:#fff;border:2px solid #a9bcdc;border-top:none;box-shadow:0 1px 3px rgba(0,0,0,0.12)"></div>
<div style="position:absolute;left:780px;top:87px;width:589.50px;height:9.50px;background:#1c4fa0"></div>
<div style="position:absolute;left:784.8px;top:87.02px;height:9.76px;line-height:9.76px;font-size:6.1px;color:#fff;font-weight:bold;white-space:nowrap;transform:scaleY(1.12);">Plot Chart [<span style="font-weight:normal;font-size:0.92em">热辐</span>_component01]</div>
<svg style="position:absolute;left:0;top:0" width="1378" height="637"><g stroke="#fff" stroke-width="1.0" fill="none"><line x1="1336.5" y1="91.8" x2="1342" y2="91.8"/><rect x="1348.8" y="89.5" width="4.7000000000000455" height="5.0" rx="0.8"/><line x1="1361" y1="89.3" x2="1365.2" y2="94.7"/><line x1="1365.2" y1="89.3" x2="1361" y2="94.7"/></g></svg>
<div style="position:absolute;left:784.5px;top:98.48px;height:8.64px;line-height:8.64px;font-size:5.4px;color:#4f7cc9;font-weight:normal;white-space:nowrap;transform:scaleY(1.12);">Diagram</div>
<div style="position:absolute;left:813px;top:98.48px;height:8.64px;line-height:8.64px;font-size:5.4px;color:#444;font-weight:normal;white-space:nowrap;transform:scaleY(1.12);">Table</div>
<div style="position:absolute;left:834px;top:98.48px;height:8.64px;line-height:8.64px;font-size:5.4px;color:#444;font-weight:normal;white-space:nowrap;transform:scaleY(1.12);">Calculation</div>
<div style="position:absolute;left:782px;top:107px;width:579.00px;height:1.00px;background:#c9c9c9"></div>
<div style="position:absolute;left:784.5px;top:106.5px;width:20.50px;height:1.50px;background:#1c4fa0"></div>
<div style="position:absolute;left:1360.5px;top:108px;width:1.00px;height:429.00px;background:#f2f2f2"></div>
<div style="position:absolute;left:782px;top:537px;width:579.00px;height:1.00px;background:#ececec"></div>
<svg style="position:absolute;left:1361px;top:321.5px" width="8" height="7" viewBox="0 0 8 7"><path d="M4 0.8L1.2 3.5L4 6.2M7 0.8L4.2 3.5L7 6.2" fill="none" stroke="#4f7cc9" stroke-width="1"/></svg>
<svg style="position:absolute;left:1071px;top:538px" width="8" height="8" viewBox="0 0 8 8"><path d="M1 4L4 1.3L7 4M1 7L4 4.3L7 7" fill="none" stroke="#4f7cc9" stroke-width="1"/></svg>
<svg style="position:absolute;left:0;top:0" width="1378" height="637" viewBox="0 0 1378 637"><rect x="784" y="112" width="27" height="400" fill="#fafafa"/><rect x="811" y="512" width="500" height="22" fill="#fbfbfb"/><line x1="810.75" y1="503.52" x2="1311" y2="503.52" stroke="#f1f1f1" stroke-width="1" stroke-dasharray="2,5"/><line x1="810.75" y1="495.54" x2="1311" y2="495.54" stroke="#f1f1f1" stroke-width="1" stroke-dasharray="2,5"/><line x1="810.75" y1="487.56" x2="1311" y2="487.56" stroke="#f1f1f1" stroke-width="1" stroke-dasharray="2,5"/><line x1="810.75" y1="479.58" x2="1311" y2="479.58" stroke="#f1f1f1" stroke-width="1" stroke-dasharray="2,5"/><line x1="810.75" y1="471.60" x2="1311" y2="471.60" stroke="#f1f1f1" stroke-width="1" stroke-dasharray="2,5"/><line x1="810.75" y1="463.62" x2="1311" y2="463.62" stroke="#f1f1f1" stroke-width="1" stroke-dasharray="2,5"/><line x1="810.75" y1="455.64" x2="1311" y2="455.64" stroke="#f1f1f1" stroke-width="1" stroke-dasharray="2,5"/><line x1="810.75" y1="447.66" x2="1311" y2="447.66" stroke="#f1f1f1" stroke-width="1" stroke-dasharray="2,5"/><line x1="810.75" y1="439.68" x2="1311" y2="439.68" stroke="#f1f1f1" stroke-width="1" stroke-dasharray="2,5"/><line x1="810.75" y1="431.70" x2="1311" y2="431.70" stroke="#f1f1f1" stroke-width="1" stroke-dasharray="2,5"/><line x1="810.75" y1="423.72" x2="1311" y2="423.72" stroke="#f1f1f1" stroke-width="1" stroke-dasharray="2,5"/><line x1="810.75" y1="415.74" x2="1311" y2="415.74" stroke="#f1f1f1" stroke-width="1" stroke-dasharray="2,5"/><line x1="810.75" y1="407.76" x2="1311" y2="407.76" stroke="#f1f1f1" stroke-width="1" stroke-dasharray="2,5"/><line x1="810.75" y1="399.78" x2="1311" y2="399.78" stroke="#f1f1f1" stroke-width="1" stroke-dasharray="2,5"/><line x1="810.75" y1="391.80" x2="1311" y2="391.80" stroke="#f1f1f1" stroke-width="1" stroke-dasharray="2,5"/><line x1="810.75" y1="383.82" x2="1311" y2="383.82" stroke="#f1f1f1" stroke-width="1" stroke-dasharray="2,5"/><line x1="810.75" y1="375.84" x2="1311" y2="375.84" stroke="#f1f1f1" stroke-width="1" stroke-dasharray="2,5"/><line x1="810.75" y1="367.86" x2="1311" y2="367.86" stroke="#f1f1f1" stroke-width="1" stroke-dasharray="2,5"/><line x1="810.75" y1="359.88" x2="1311" y2="359.88" stroke="#f1f1f1" stroke-width="1" stroke-dasharray="2,5"/><line x1="810.75" y1="351.90" x2="1311" y2="351.90" stroke="#f1f1f1" stroke-width="1" stroke-dasharray="2,5"/><line x1="810.75" y1="343.92" x2="1311" y2="343.92" stroke="#f1f1f1" stroke-width="1" stroke-dasharray="2,5"/><line x1="810.75" y1="335.94" x2="1311" y2="335.94" stroke="#f1f1f1" stroke-width="1" stroke-dasharray="2,5"/><line x1="810.75" y1="327.96" x2="1311" y2="327.96" stroke="#f1f1f1" stroke-width="1" stroke-dasharray="2,5"/><line x1="810.75" y1="319.98" x2="1311" y2="319.98" stroke="#f1f1f1" stroke-width="1" stroke-dasharray="2,5"/><line x1="810.75" y1="312.00" x2="1311" y2="312.00" stroke="#f1f1f1" stroke-width="1" stroke-dasharray="2,5"/><line x1="810.75" y1="304.02" x2="1311" y2="304.02" stroke="#f1f1f1" stroke-width="1" stroke-dasharray="2,5"/><line x1="810.75" y1="296.04" x2="1311" y2="296.04" stroke="#f1f1f1" stroke-width="1" stroke-dasharray="2,5"/><line x1="810.75" y1="288.06" x2="1311" y2="288.06" stroke="#f1f1f1" stroke-width="1" stroke-dasharray="2,5"/><line x1="810.75" y1="280.08" x2="1311" y2="280.08" stroke="#f1f1f1" stroke-width="1" stroke-dasharray="2,5"/><line x1="810.75" y1="272.10" x2="1311" y2="272.10" stroke="#f1f1f1" stroke-width="1" stroke-dasharray="2,5"/><line x1="810.75" y1="264.12" x2="1311" y2="264.12" stroke="#f1f1f1" stroke-width="1" stroke-dasharray="2,5"/><line x1="810.75" y1="256.14" x2="1311" y2="256.14" stroke="#f1f1f1" stroke-width="1" stroke-dasharray="2,5"/><line x1="810.75" y1="248.16" x2="1311" y2="248.16" stroke="#f1f1f1" stroke-width="1" stroke-dasharray="2,5"/><line x1="810.75" y1="240.18" x2="1311" y2="240.18" stroke="#f1f1f1" stroke-width="1" stroke-dasharray="2,5"/><line x1="810.75" y1="232.20" x2="1311" y2="232.20" stroke="#f1f1f1" stroke-width="1" stroke-dasharray="2,5"/><line x1="810.75" y1="224.22" x2="1311" y2="224.22" stroke="#f1f1f1" stroke-width="1" stroke-dasharray="2,5"/><line x1="810.75" y1="216.24" x2="1311" y2="216.24" stroke="#f1f1f1" stroke-width="1" stroke-dasharray="2,5"/><line x1="810.75" y1="208.26" x2="1311" y2="208.26" stroke="#f1f1f1" stroke-width="1" stroke-dasharray="2,5"/><line x1="810.75" y1="200.28" x2="1311" y2="200.28" stroke="#f1f1f1" stroke-width="1" stroke-dasharray="2,5"/><line x1="810.75" y1="192.30" x2="1311" y2="192.30" stroke="#f1f1f1" stroke-width="1" stroke-dasharray="2,5"/><line x1="810.75" y1="184.32" x2="1311" y2="184.32" stroke="#f1f1f1" stroke-width="1" stroke-dasharray="2,5"/><line x1="810.75" y1="176.34" x2="1311" y2="176.34" stroke="#f1f1f1" stroke-width="1" stroke-dasharray="2,5"/><line x1="810.75" y1="168.36" x2="1311" y2="168.36" stroke="#f1f1f1" stroke-width="1" stroke-dasharray="2,5"/><line x1="810.75" y1="160.38" x2="1311" y2="160.38" stroke="#f1f1f1" stroke-width="1" stroke-dasharray="2,5"/><line x1="810.75" y1="152.40" x2="1311" y2="152.40" stroke="#f1f1f1" stroke-width="1" stroke-dasharray="2,5"/><line x1="810.75" y1="144.42" x2="1311" y2="144.42" stroke="#f1f1f1" stroke-width="1" stroke-dasharray="2,5"/><line x1="810.75" y1="136.44" x2="1311" y2="136.44" stroke="#f1f1f1" stroke-width="1" stroke-dasharray="2,5"/><line x1="810.75" y1="128.46" x2="1311" y2="128.46" stroke="#f1f1f1" stroke-width="1" stroke-dasharray="2,5"/><line x1="810.75" y1="120.48" x2="1311" y2="120.48" stroke="#f1f1f1" stroke-width="1" stroke-dasharray="2,5"/><line x1="826.13" y1="112" x2="826.13" y2="512" stroke="#f1f1f1" stroke-width="1" stroke-dasharray="2,5"/><line x1="841.52" y1="112" x2="841.52" y2="512" stroke="#f1f1f1" stroke-width="1" stroke-dasharray="2,5"/><line x1="856.90" y1="112" x2="856.90" y2="512" stroke="#f1f1f1" stroke-width="1" stroke-dasharray="2,5"/><line x1="872.29" y1="112" x2="872.29" y2="512" stroke="#f1f1f1" stroke-width="1" stroke-dasharray="2,5"/><line x1="887.67" y1="112" x2="887.67" y2="512" stroke="#f1f1f1" stroke-width="1" stroke-dasharray="2,5"/><line x1="903.06" y1="112" x2="903.06" y2="512" stroke="#f1f1f1" stroke-width="1" stroke-dasharray="2,5"/><line x1="918.44" y1="112" x2="918.44" y2="512" stroke="#f1f1f1" stroke-width="1" stroke-dasharray="2,5"/><line x1="933.83" y1="112" x2="933.83" y2="512" stroke="#f1f1f1" stroke-width="1" stroke-dasharray="2,5"/><line x1="949.21" y1="112" x2="949.21" y2="512" stroke="#f1f1f1" stroke-width="1" stroke-dasharray="2,5"/><line x1="964.60" y1="112" x2="964.60" y2="512" stroke="#f1f1f1" stroke-width="1" stroke-dasharray="2,5"/><line x1="979.98" y1="112" x2="979.98" y2="512" stroke="#f1f1f1" stroke-width="1" stroke-dasharray="2,5"/><line x1="995.37" y1="112" x2="995.37" y2="512" stroke="#f1f1f1" stroke-width="1" stroke-dasharray="2,5"/><line x1="1010.75" y1="112" x2="1010.75" y2="512" stroke="#f1f1f1" stroke-width="1" stroke-dasharray="2,5"/><line x1="1026.13" y1="112" x2="1026.13" y2="512" stroke="#f1f1f1" stroke-width="1" stroke-dasharray="2,5"/><line x1="1041.52" y1="112" x2="1041.52" y2="512" stroke="#f1f1f1" stroke-width="1" stroke-dasharray="2,5"/><line x1="1056.90" y1="112" x2="1056.90" y2="512" stroke="#f1f1f1" stroke-width="1" stroke-dasharray="2,5"/><line x1="1072.29" y1="112" x2="1072.29" y2="512" stroke="#f1f1f1" stroke-width="1" stroke-dasharray="2,5"/><line x1="1087.67" y1="112" x2="1087.67" y2="512" stroke="#f1f1f1" stroke-width="1" stroke-dasharray="2,5"/><line x1="1103.06" y1="112" x2="1103.06" y2="512" stroke="#f1f1f1" stroke-width="1" stroke-dasharray="2,5"/><line x1="1118.44" y1="112" x2="1118.44" y2="512" stroke="#f1f1f1" stroke-width="1" stroke-dasharray="2,5"/><line x1="1133.83" y1="112" x2="1133.83" y2="512" stroke="#f1f1f1" stroke-width="1" stroke-dasharray="2,5"/><line x1="1149.21" y1="112" x2="1149.21" y2="512" stroke="#f1f1f1" stroke-width="1" stroke-dasharray="2,5"/><line x1="1164.60" y1="112" x2="1164.60" y2="512" stroke="#f1f1f1" stroke-width="1" stroke-dasharray="2,5"/><line x1="1179.98" y1="112" x2="1179.98" y2="512" stroke="#f1f1f1" stroke-width="1" stroke-dasharray="2,5"/><line x1="1195.37" y1="112" x2="1195.37" y2="512" stroke="#f1f1f1" stroke-width="1" stroke-dasharray="2,5"/><line x1="1210.75" y1="112" x2="1210.75" y2="512" stroke="#f1f1f1" stroke-width="1" stroke-dasharray="2,5"/><line x1="1226.13" y1="112" x2="1226.13" y2="512" stroke="#f1f1f1" stroke-width="1" stroke-dasharray="2,5"/><line x1="1241.52" y1="112" x2="1241.52" y2="512" stroke="#f1f1f1" stroke-width="1" stroke-dasharray="2,5"/><line x1="1256.90" y1="112" x2="1256.90" y2="512" stroke="#f1f1f1" stroke-width="1" stroke-dasharray="2,5"/><line x1="1272.29" y1="112" x2="1272.29" y2="512" stroke="#f1f1f1" stroke-width="1" stroke-dasharray="2,5"/><line x1="1287.67" y1="112" x2="1287.67" y2="512" stroke="#f1f1f1" stroke-width="1" stroke-dasharray="2,5"/><line x1="1303.06" y1="112" x2="1303.06" y2="512" stroke="#f1f1f1" stroke-width="1" stroke-dasharray="2,5"/><line x1="810.75" y1="112.5" x2="1311" y2="112.5" stroke="#cfd7e1" stroke-width="1"/><line x1="1310.75" y1="112" x2="1310.75" y2="512" stroke="#cdd5df" stroke-width="1"/><line x1="810.75" y1="112" x2="810.75" y2="516" stroke="#d9dde3" stroke-width="1"/><line x1="810.75" y1="511.5" x2="1311" y2="511.5" stroke="#e3e5e8" stroke-width="1" stroke-dasharray="4,2"/><line x1="807.5" y1="511.50" x2="810.75" y2="511.50" stroke="#b5b5b5" stroke-width="0.8"/><line x1="807.5" y1="471.60" x2="810.75" y2="471.60" stroke="#b5b5b5" stroke-width="0.8"/><line x1="807.5" y1="431.70" x2="810.75" y2="431.70" stroke="#b5b5b5" stroke-width="0.8"/><line x1="807.5" y1="391.80" x2="810.75" y2="391.80" stroke="#b5b5b5" stroke-width="0.8"/><line x1="807.5" y1="351.90" x2="810.75" y2="351.90" stroke="#b5b5b5" stroke-width="0.8"/><line x1="807.5" y1="312.00" x2="810.75" y2="312.00" stroke="#b5b5b5" stroke-width="0.8"/><line x1="807.5" y1="272.10" x2="810.75" y2="272.10" stroke="#b5b5b5" stroke-width="0.8"/><line x1="807.5" y1="232.20" x2="810.75" y2="232.20" stroke="#b5b5b5" stroke-width="0.8"/><line x1="807.5" y1="192.30" x2="810.75" y2="192.30" stroke="#b5b5b5" stroke-width="0.8"/><line x1="807.5" y1="152.40" x2="810.75" y2="152.40" stroke="#b5b5b5" stroke-width="0.8"/><line x1="807.5" y1="112.50" x2="810.75" y2="112.50" stroke="#b5b5b5" stroke-width="0.8"/><line x1="810.75" y1="512" x2="810.75" y2="516" stroke="#c3c3c3" stroke-width="1"/><line x1="826.13" y1="512" x2="826.13" y2="514.5" stroke="#c3c3c3" stroke-width="1"/><line x1="841.52" y1="512" x2="841.52" y2="514.5" stroke="#c3c3c3" stroke-width="1"/><line x1="856.90" y1="512" x2="856.90" y2="514.5" stroke="#c3c3c3" stroke-width="1"/><line x1="872.29" y1="512" x2="872.29" y2="514.5" stroke="#c3c3c3" stroke-width="1"/><line x1="887.67" y1="512" x2="887.67" y2="516" stroke="#c3c3c3" stroke-width="1"/><line x1="903.06" y1="512" x2="903.06" y2="514.5" stroke="#c3c3c3" stroke-width="1"/><line x1="918.44" y1="512" x2="918.44" y2="514.5" stroke="#c3c3c3" stroke-width="1"/><line x1="933.83" y1="512" x2="933.83" y2="514.5" stroke="#c3c3c3" stroke-width="1"/><line x1="949.21" y1="512" x2="949.21" y2="514.5" stroke="#c3c3c3" stroke-width="1"/><line x1="964.60" y1="512" x2="964.60" y2="516" stroke="#c3c3c3" stroke-width="1"/><line x1="979.98" y1="512" x2="979.98" y2="514.5" stroke="#c3c3c3" stroke-width="1"/><line x1="995.37" y1="512" x2="995.37" y2="514.5" stroke="#c3c3c3" stroke-width="1"/><line x1="1010.75" y1="512" x2="1010.75" y2="514.5" stroke="#c3c3c3" stroke-width="1"/><line x1="1026.13" y1="512" x2="1026.13" y2="514.5" stroke="#c3c3c3" stroke-width="1"/><line x1="1041.52" y1="512" x2="1041.52" y2="516" stroke="#c3c3c3" stroke-width="1"/><line x1="1056.90" y1="512" x2="1056.90" y2="514.5" stroke="#c3c3c3" stroke-width="1"/><line x1="1072.29" y1="512" x2="1072.29" y2="514.5" stroke="#c3c3c3" stroke-width="1"/><line x1="1087.67" y1="512" x2="1087.67" y2="514.5" stroke="#c3c3c3" stroke-width="1"/><line x1="1103.06" y1="512" x2="1103.06" y2="514.5" stroke="#c3c3c3" stroke-width="1"/><line x1="1118.44" y1="512" x2="1118.44" y2="516" stroke="#c3c3c3" stroke-width="1"/><line x1="1133.83" y1="512" x2="1133.83" y2="514.5" stroke="#c3c3c3" stroke-width="1"/><line x1="1149.21" y1="512" x2="1149.21" y2="514.5" stroke="#c3c3c3" stroke-width="1"/><line x1="1164.60" y1="512" x2="1164.60" y2="514.5" stroke="#c3c3c3" stroke-width="1"/><line x1="1179.98" y1="512" x2="1179.98" y2="514.5" stroke="#c3c3c3" stroke-width="1"/><line x1="1195.37" y1="512" x2="1195.37" y2="516" stroke="#c3c3c3" stroke-width="1"/><line x1="1210.75" y1="512" x2="1210.75" y2="514.5" stroke="#c3c3c3" stroke-width="1"/><line x1="1226.13" y1="512" x2="1226.13" y2="514.5" stroke="#c3c3c3" stroke-width="1"/><line x1="1241.52" y1="512" x2="1241.52" y2="514.5" stroke="#c3c3c3" stroke-width="1"/><line x1="1256.90" y1="512" x2="1256.90" y2="514.5" stroke="#c3c3c3" stroke-width="1"/><line x1="1272.29" y1="512" x2="1272.29" y2="516" stroke="#c3c3c3" stroke-width="1"/><line x1="1287.67" y1="512" x2="1287.67" y2="514.5" stroke="#c3c3c3" stroke-width="1"/><line x1="1303.06" y1="512" x2="1303.06" y2="514.5" stroke="#c3c3c3" stroke-width="1"/><path d="M810.8,123.3 L811.3,124.9 L811.9,128.0 L814.4,145.4 L815.1,148.2 L815.8,149.0 L816.1,148.8 L816.4,148.0 L817.2,144.6 L820.0,122.8 L820.6,119.2 L821.2,117.1 L821.5,116.6 L821.8,116.5 L822.4,117.4 L825.1,127.6 L825.8,129.2 L826.1,129.5 L826.4,129.5 L827.0,128.6 L827.7,126.5 L830.3,114.6 L830.8,113.2 L831.4,112.6 L831.7,112.6 L832.0,112.9 L832.6,114.4 L835.4,126.7 L836.2,128.8 L836.9,129.5 L837.5,129.0 L838.2,127.4 L841.1,115.2 L841.8,113.3 L842.5,112.6 L842.8,112.6 L843.2,113.1 L844.0,115.0 L847.1,127.4 L847.8,129.0 L848.4,129.5 L849.1,129.0 L849.8,127.5 L852.9,115.5 L853.7,113.6 L854.4,112.8 L855.1,113.2 L855.8,114.6 L859.1,126.6 L859.9,128.7 L860.8,129.5 L861.5,129.0 L862.3,127.6 L865.7,115.7 L866.5,113.8 L867.3,113.1 L868.0,113.5 L868.8,114.9 L872.3,126.8 L873.2,128.7 L873.7,129.3 L874.1,129.5 L874.9,129.1 L875.8,127.6 L879.4,116.3 L880.3,114.4 L881.1,113.7 L881.9,114.1 L882.8,115.5 L886.5,126.8 L887.5,128.7 L888.1,129.3 L888.5,129.5 L889.4,129.1 L890.3,127.7 L894.1,117.2 L895.1,115.5 L896.0,114.8 L896.8,115.0 L897.8,116.2 L898.8,118.5 L901.9,127.0 L903.0,128.8 L903.5,129.3 L904.1,129.5 L905.0,129.2 L906.0,127.9 L907.1,125.8 L910.0,118.9 L911.0,117.3 L911.9,116.5 L912.9,116.6 L914.0,117.7 L915.1,119.8 L918.5,127.2 L919.7,128.8 L920.8,129.5 L921.9,129.2 L923.1,128.1 L926.6,122.1 L927.8,120.5 L928.9,119.6 L930.0,119.5 L930.8,119.9 L931.8,120.7 L936.1,127.4 L937.3,128.6 L938.4,129.3 L939.4,129.5 L940.5,129.2 L941.8,128.4 L945.7,125.3 L947.1,124.7 L948.4,124.8 L950.1,125.5 L953.7,128.0 L955.5,129.0 L957.4,129.4 L961.3,129.6 L963.2,130.2 L965.1,131.5 L969.1,135.2 L971.1,136.1 L972.4,136.1 L973.9,135.2 L975.1,134.1 L977.8,130.9 L979.0,129.9 L980.1,129.5 L981.1,129.8 L981.8,130.4 L982.5,131.4 L984.1,134.9 L988.5,150.1 L989.9,154.1 L991.2,156.6 L991.8,157.2 L992.4,157.5 L993.1,157.3 L993.8,156.6 L995.1,153.8 L996.6,148.8 L1000.4,133.1 L1001.5,130.2 L1002.1,129.6 L1002.6,129.5 L1003.4,130.5 L1004.1,132.7 L1005.8,141.6 L1007.1,152.7 L1010.4,183.5 L1012.1,196.1 L1013.5,202.6 L1014.2,204.4 L1014.9,205.0 L1015.3,204.8 L1015.7,204.2 L1016.4,202.0 L1017.9,193.5 L1019.4,179.0 L1022.9,138.2 L1023.8,131.4 L1024.3,129.8 L1024.7,129.5 L1025.3,131.4 L1025.9,136.1 L1027.1,154.3 L1031.2,251.8 L1033.0,285.8 L1033.8,297.5 L1034.7,306.0 L1035.5,311.1 L1035.9,312.2 L1036.3,312.6 L1036.8,311.9 L1037.1,310.4 L1038.0,303.6 L1038.8,292.6 L1039.5,276.0 L1040.8,235.1 L1042.7,145.2 L1043.1,133.4 L1043.4,129.5 L1043.9,139.0 L1044.4,165.1 L1046.1,325.2 L1046.9,388.3 L1047.9,436.1 L1049.1,467.3 L1049.8,479.8 L1050.7,489.0 L1051.8,496.4 L1053.1,501.8 L1054.6,505.5 L1055.5,506.9 L1056.6,508.0 L1057.8,508.9 L1059.2,509.7 L1062.9,510.6 L1066.5,511.0 L1071.5,511.3 L1091.1,511.5 L1160.0,511.4 L1172.4,511.2 L1180.1,510.9 L1183.8,510.5 L1186.9,509.9 L1189.4,509.2 L1191.4,508.2 L1193.2,506.9 L1194.8,505.2 L1196.1,503.0 L1197.3,500.4 L1198.6,496.3 L1199.8,490.9 L1200.8,484.3 L1201.6,476.6 L1203.1,456.0 L1204.3,426.8 L1205.2,393.4 L1206.1,345.9 L1208.8,160.0 L1209.3,137.3 L1209.5,132.1 L1209.8,129.5 L1210.3,134.2 L1210.8,147.2 L1213.6,272.8 L1214.6,305.5 L1215.8,333.5 L1217.1,356.6 L1218.7,373.0 L1219.5,378.9 L1220.4,383.6 L1221.4,386.7 L1222.4,388.2 L1223.0,388.4 L1223.6,388.2 L1224.8,386.4 L1225.9,382.9 L1227.1,377.7 L1228.2,370.8 L1229.3,362.7 L1231.4,341.4 L1233.3,317.1 L1235.1,286.8 L1240.1,185.8 L1241.6,159.5 L1243.2,138.8 L1244.0,132.9 L1244.8,129.9 L1245.1,129.5 L1245.4,129.6 L1246.2,131.8 L1247.1,137.0 L1247.9,144.6 L1249.4,162.7 L1254.4,229.5 L1256.2,249.0 L1258.0,265.1 L1259.8,277.7 L1261.6,287.5 L1263.5,294.3 L1264.5,296.6 L1265.5,298.1 L1266.8,298.9 L1267.4,298.9 L1268.0,298.6 L1269.2,297.2 L1270.5,294.6 L1271.8,291.1 L1273.1,286.2 L1275.6,273.6 L1277.9,258.7 L1280.3,240.0 L1287.4,174.5 L1289.7,155.2 L1290.9,146.6 L1292.1,139.5 L1293.3,134.5 L1294.4,131.2 L1295.1,130.0 L1295.8,129.5 L1296.5,129.6 L1297.2,130.3 L1298.7,133.7 L1300.2,139.6 L1303.0,154.6 L1310.8,204.5" fill="none" stroke="#6ab9ad" stroke-width="1.15" stroke-linejoin="round"/></svg>
<div style="position:absolute;left:505.50px;width:300px;text-align:right;top:507.84px;height:9.12px;line-height:9.12px;font-size:5.7px;color:#555;font-weight:normal;white-space:nowrap;transform:scaleY(1.25);">0</div>
<div style="position:absolute;left:505.50px;width:300px;text-align:right;top:467.94px;height:9.12px;line-height:9.12px;font-size:5.7px;color:#555;font-weight:normal;white-space:nowrap;transform:scaleY(1.25);">10</div>
<div style="position:absolute;left:505.50px;width:300px;text-align:right;top:428.04px;height:9.12px;line-height:9.12px;font-size:5.7px;color:#555;font-weight:normal;white-space:nowrap;transform:scaleY(1.25);">20</div>
<div style="position:absolute;left:505.50px;width:300px;text-align:right;top:388.14px;height:9.12px;line-height:9.12px;font-size:5.7px;color:#555;font-weight:normal;white-space:nowrap;transform:scaleY(1.25);">30</div>
<div style="position:absolute;left:505.50px;width:300px;text-align:right;top:348.24px;height:9.12px;line-height:9.12px;font-size:5.7px;color:#555;font-weight:normal;white-space:nowrap;transform:scaleY(1.25);">40</div>
<div style="position:absolute;left:505.50px;width:300px;text-align:right;top:308.34px;height:9.12px;line-height:9.12px;font-size:5.7px;color:#555;font-weight:normal;white-space:nowrap;transform:scaleY(1.25);">50</div>
<div style="position:absolute;left:505.50px;width:300px;text-align:right;top:268.44px;height:9.12px;line-height:9.12px;font-size:5.7px;color:#555;font-weight:normal;white-space:nowrap;transform:scaleY(1.25);">60</div>
<div style="position:absolute;left:505.50px;width:300px;text-align:right;top:228.54px;height:9.12px;line-height:9.12px;font-size:5.7px;color:#555;font-weight:normal;white-space:nowrap;transform:scaleY(1.25);">70</div>
<div style="position:absolute;left:505.50px;width:300px;text-align:right;top:188.64px;height:9.12px;line-height:9.12px;font-size:5.7px;color:#555;font-weight:normal;white-space:nowrap;transform:scaleY(1.25);">80</div>
<div style="position:absolute;left:505.50px;width:300px;text-align:right;top:148.74px;height:9.12px;line-height:9.12px;font-size:5.7px;color:#555;font-weight:normal;white-space:nowrap;transform:scaleY(1.25);">90</div>
<div style="position:absolute;left:505.50px;width:300px;text-align:right;top:108.84px;height:9.12px;line-height:9.12px;font-size:5.7px;color:#555;font-weight:normal;white-space:nowrap;transform:scaleY(1.25);">100</div>
<div style="position:absolute;left:811.5px;top:515.52px;height:8.96px;line-height:8.96px;font-size:5.6px;color:#555;font-weight:normal;white-space:nowrap;transform:scaleY(1.12);">400</div>
<div style="position:absolute;left:738.67px;width:300px;text-align:center;top:515.52px;height:8.96px;line-height:8.96px;font-size:5.6px;color:#555;font-weight:normal;white-space:nowrap;transform:scaleY(1.12);">500</div>
<div style="position:absolute;left:815.60px;width:300px;text-align:center;top:515.52px;height:8.96px;line-height:8.96px;font-size:5.6px;color:#555;font-weight:normal;white-space:nowrap;transform:scaleY(1.12);">600</div>
<div style="position:absolute;left:892.52px;width:300px;text-align:center;top:515.52px;height:8.96px;line-height:8.96px;font-size:5.6px;color:#555;font-weight:normal;white-space:nowrap;transform:scaleY(1.12);">700</div>
<div style="position:absolute;left:969.44px;width:300px;text-align:center;top:515.52px;height:8.96px;line-height:8.96px;font-size:5.6px;color:#555;font-weight:normal;white-space:nowrap;transform:scaleY(1.12);">800</div>
<div style="position:absolute;left:1046.37px;width:300px;text-align:center;top:515.52px;height:8.96px;line-height:8.96px;font-size:5.6px;color:#555;font-weight:normal;white-space:nowrap;transform:scaleY(1.12);">900</div>
<div style="position:absolute;left:1123.29px;width:300px;text-align:center;top:515.52px;height:8.96px;line-height:8.96px;font-size:5.6px;color:#555;font-weight:normal;white-space:nowrap;transform:scaleY(1.12);">1000</div>
<div style="position:absolute;left:1010.00px;width:300px;text-align:right;top:515.52px;height:8.96px;line-height:8.96px;font-size:5.6px;color:#555;font-weight:normal;white-space:nowrap;transform:scaleY(1.12);">1050</div>
<div style="position:absolute;left:910.60px;width:300px;text-align:center;top:521.82px;height:10.56px;line-height:10.56px;font-size:6.6px;color:#555;font-weight:normal;white-space:nowrap;transform:scaleY(1.12);">Wavelength [nm]</div>
<div style="position:absolute;left:691.3px;top:306.5px;width:200px;height:11px;line-height:11px;text-align:center;font-size:6.6px;color:#555;transform:rotate(-90deg)">Transmittance Magnitude [%]</div>
<div style="position:absolute;left:1307.3px;top:111.5px;width:48.00px;height:22.20px;background:#fff;border:1px solid #dfe5ec;border-radius:3px"></div>
<div style="position:absolute;left:1312px;top:113.72px;height:8.96px;line-height:8.96px;font-size:5.6px;color:#333;font-weight:bold;white-space:nowrap;transform:scaleY(1.12);">Legend</div>
<div style="position:absolute;left:1311.3px;top:125.6px;width:4px;height:4px;border-radius:50%;background:#3d9a8a"></div>
<div style="position:absolute;left:1317.3px;top:123.60px;height:8.00px;line-height:8.00px;font-size:5.0px;color:#555;font-weight:normal;white-space:nowrap;transform:scaleY(1.12);">T P-pol (0deg)</div>
</body></html>
